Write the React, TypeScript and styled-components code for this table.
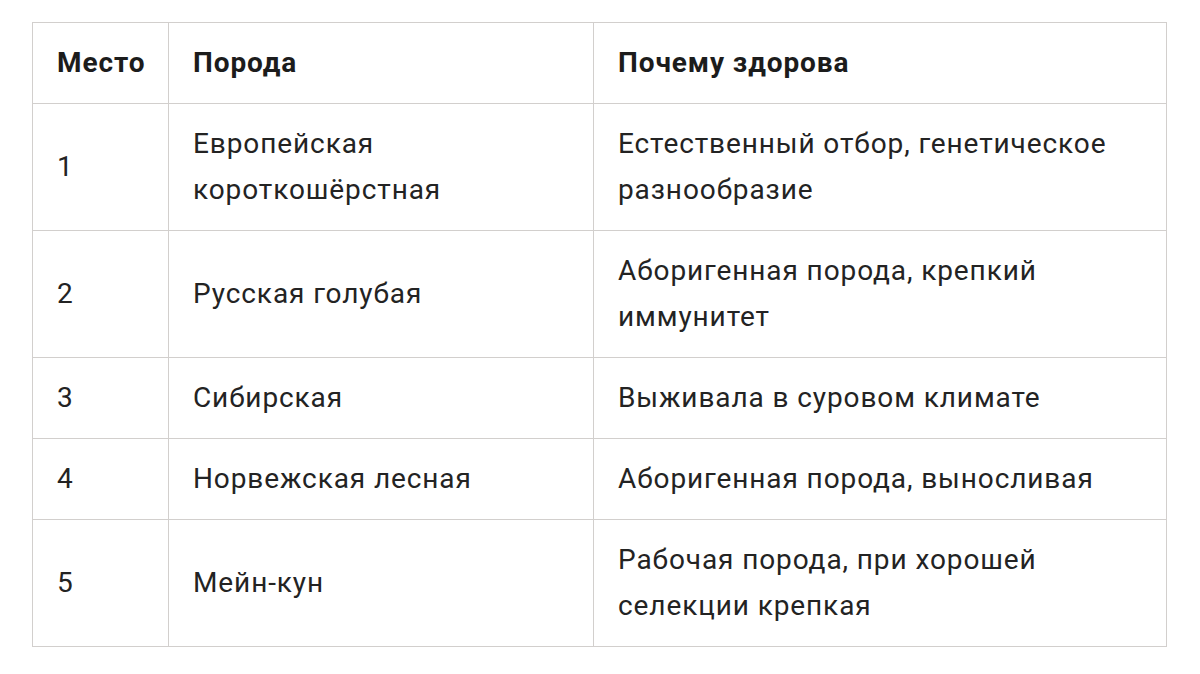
import React from "react";
import styled, { createGlobalStyle } from "styled-components";

const Global = createGlobalStyle`
  html, body { margin: 0; padding: 0; background: #ffffff; }
  body { font-family: Roboto, "Noto Sans", sans-serif; }
`;

const Page = styled.div`
  padding: 22px 0 0 32px;
`;

const Table = styled.table`
  border-collapse: collapse;
  width: 1134px;
  table-layout: fixed;
  font-family: Roboto, "Noto Sans", sans-serif;
  font-size: 28px;
  letter-spacing: 0.9px;
  line-height: 46px;
  color: #232323;
`;

const Col = styled.col<{ $w: number }>`
  width: ${(p) => p.$w}px;
`;

const Th = styled.th`
  border: 1px solid #d2cfcd;
  text-align: left;
  font-weight: 700;
  color: #1c1c1c;
  padding: 17px 24px 17px 24px;
  vertical-align: middle;
`;

const Td = styled.td`
  border: 1px solid #d2cfcd;
  padding: 17px 24px 17px 24px;
  vertical-align: middle;
`;

const rows = [
  ["1", "Европейская короткошёрстная", "Естественный отбор, генетическое разнообразие"],
  ["2", "Русская голубая", "Аборигенная порода, крепкий иммунитет"],
  ["3", "Сибирская", "Выживала в суровом климате"],
  ["4", "Норвежская лесная", "Аборигенная порода, выносливая"],
  ["5", "Мейн-кун", "Рабочая порода, при хорошей селекции крепкая"],
];

export default function App() {
  return (
    <Page>
      <Global />
      <Table>
        <colgroup>
          <Col $w={136} />
          <Col $w={425} />
          <Col $w={573} />
        </colgroup>
        <thead>
          <tr>
            <Th>Место</Th>
            <Th>Порода</Th>
            <Th>Почему здорова</Th>
          </tr>
        </thead>
        <tbody>
          {rows.map((r) => (
            <tr key={r[0]}>
              <Td>{r[0]}</Td>
              <Td>{r[1]}</Td>
              <Td>{r[2]}</Td>
            </tr>
          ))}
        </tbody>
      </Table>
    </Page>
  );
}
